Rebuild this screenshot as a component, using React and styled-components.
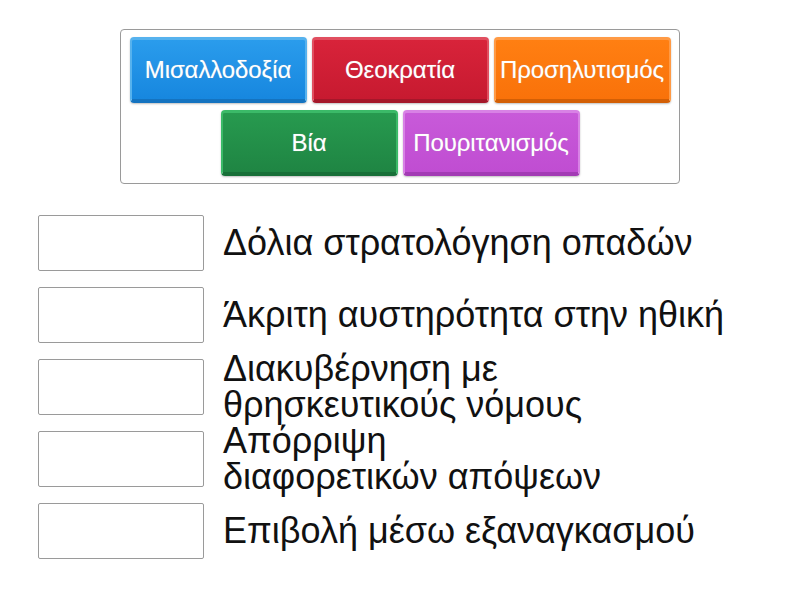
import React from "react";
import styled, { createGlobalStyle } from "styled-components";

const Global = createGlobalStyle`
  html, body { margin: 0; padding: 0; background: #fff; }
  body { font-family: "Liberation Sans", Arial, sans-serif; }
`;

const Page = styled.div`
  width: 800px;
  height: 600px;
  display: flex;
  flex-direction: column;
  align-items: center;
  padding-top: 29px;
  box-sizing: border-box;
`;

const Bank = styled.div`
  width: 560px;
  box-sizing: border-box;
  border: 1px solid #9a9a9a;
  border-radius: 4px;
  padding: 7px 8px 7px 8px;
  display: flex;
  flex-wrap: wrap;
  justify-content: center;
  gap: 7px 5px;
`;

const Tile = styled.div`
  width: 177px;
  height: 66px;
  box-sizing: border-box;
  border-radius: 4px;
  display: flex;
  align-items: center;
  justify-content: center;
  color: #fff;
  font-size: 24px;
  letter-spacing: -0.1px;
  background: linear-gradient(${(p) => p.$top}, ${(p) => p.$bottom});
  border-top: 3px solid ${(p) => p.$light};
  border-left: 2px solid ${(p) => p.$light};
  border-right: 2px solid ${(p) => p.$light};
  border-bottom: 4px solid ${(p) => p.$dark};
  box-shadow: 0 1px 2px rgba(0,0,0,0.25);
  text-shadow: 0 0 1px rgba(255,255,255,0.5), 0 0 1px rgba(0,0,0,0.2);
  white-space: nowrap;
`;

const List = styled.div`
  width: 800px;
  display: flex;
  flex-direction: column;
  gap: 16px;
  padding: 31px 0 0 38px;
  box-sizing: border-box;
`;

const Row = styled.div`
  display: flex;
  align-items: center;
  gap: 19px;
  height: 56px;
`;

const Slot = styled.div`
  width: 166px;
  height: 56px;
  flex: none;
  box-sizing: border-box;
  border: 1px solid #9a9a9a;
  border-radius: 2px;
  background: #fff;
`;

const Label = styled.div`
  font-size: 36px;
  line-height: 36px;
  color: #111;
  white-space: nowrap;
`;

const tiles = [
  { t: "Μισαλλοδοξία", top: "#2a9cec", bottom: "#1787df", light: "#56b2ee", dark: "#1473c0" },
  { t: "Θεοκρατία", top: "#d8233a", bottom: "#c71a30", light: "#e14f60", dark: "#a5172a" },
  { t: "Προσηλυτισμός", top: "#ff7f12", bottom: "#f9720a", light: "#ff9a45", dark: "#d35f05" },
  { t: "Βία", top: "#279a4f", bottom: "#1f8543", light: "#3bba68", dark: "#187038" },
  { t: "Πουριτανισμός", top: "#c85ad9", bottom: "#c04dd2", light: "#d882e5", dark: "#a33bb5" },
];

const items = [
  ["Δόλια στρατολόγηση οπαδών"],
  ["Άκριτη αυστηρότητα στην ηθική"],
  ["Διακυβέρνηση με", "θρησκευτικούς νόμους"],
  ["Απόρριψη", "διαφορετικών απόψεων"],
  ["Επιβολή μέσω εξαναγκασμού"],
];

export default function App() {
  return (
    <>
      <Global />
      <Page>
        <Bank>
          {tiles.map((x) => (
            <Tile key={x.t} $top={x.top} $bottom={x.bottom} $light={x.light} $dark={x.dark}>
              {x.t}
            </Tile>
          ))}
        </Bank>
        <List>
          {items.map((lines) => (
            <Row key={lines.join(" ")}>
              <Slot />
              <Label>
                {lines.map((l, i) => (
                  <React.Fragment key={l}>
                    {i > 0 && <br />}
                    {l}
                  </React.Fragment>
                ))}
              </Label>
            </Row>
          ))}
        </List>
      </Page>
    </>
  );
}
